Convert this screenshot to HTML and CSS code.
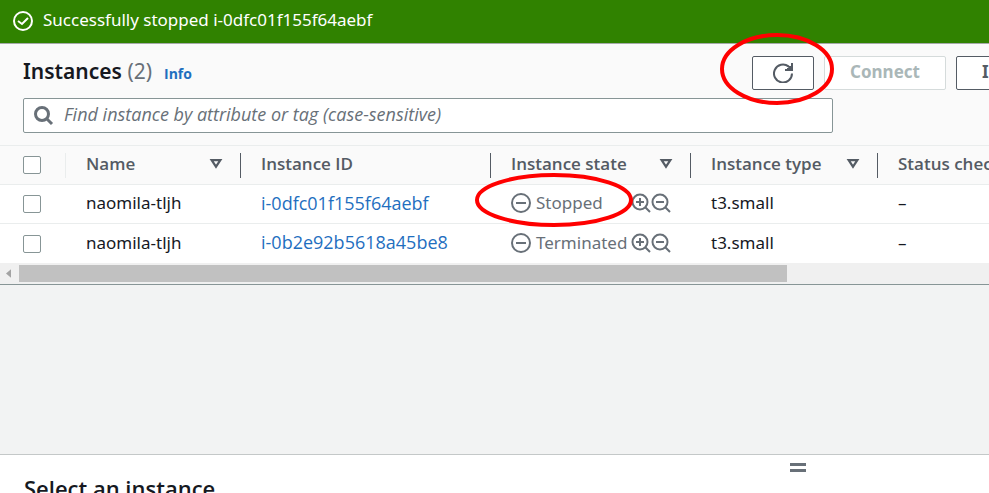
FILE: index.html
```html
<!DOCTYPE html>
<html lang="en">
<head>
<meta charset="utf-8">
<title>Instances</title>
<link rel="stylesheet" href="styles.css">
</head>
<body>
<svg class="sprite" aria-hidden="true">
  <symbol id="stopped" viewBox="0 0 20 20"><circle cx="10" cy="10" r="9"/><path d="M5 10h10"/></symbol>
  <symbol id="zoom-in" viewBox="0 0 20 20"><circle cx="9" cy="9" r="7.500"/><path d="M14 14l5 5M5 9h8M9 5v8"/></symbol>
  <symbol id="zoom-out" viewBox="0 0 20 20"><circle cx="9" cy="9" r="7.500"/><path d="M14 14l5 5M5 9h8"/></symbol>
  <symbol id="sort" viewBox="0 0 12 11"><path d="M2 2h8L6 8z"/></symbol>
</svg>

<div class="banner" role="status">
  <svg class="icon" viewBox="0 0 20 20"><circle cx="10" cy="10" r="9"/><path d="M5 10l4 3 6-6"/></svg>
  <span>Successfully stopped i-0dfc01f155f64aebf</span>
</div>

<main class="instances">
  <header class="toolbar">
    <h1>Instances <span class="count">(2)</span></h1>
    <a class="info" href="#info">Info</a>
    <div class="actions">
      <div class="marked">
        <button class="btn refresh" aria-label="Refresh">
          <svg class="icon" viewBox="0 0 20 20"><path d="M19 10.500a9 9 0 1 1-3.500-7.100L18 6M19 0v7h-7M17 3v3h-3"/></svg>
        </button>
        <svg class="ring ring-refresh" viewBox="0 0 114 72"><ellipse cx="57" cy="36" rx="55" ry="34"/></svg>
      </div>
      <button class="btn" disabled>Connect</button>
      <button class="btn">Instance state</button>
    </div>
  </header>

  <label class="search">
    <svg class="icon" viewBox="0 0 20 20"><circle cx="8" cy="8" r="6.500"/><path d="M13 13l5 5"/></svg>
    <input type="text" aria-label="Find instance" placeholder="Find instance by attribute or tag (case-sensitive)">
  </label>

  <div class="table-wrap">
    <table>
      <colgroup><col class="c-check"><col class="c-name"><col class="c-id"><col class="c-state"><col class="c-type"><col class="c-status"></colgroup>
      <thead>
        <tr>
          <th><input type="checkbox" aria-label="Select all"></th>
          <th><div class="head">Name<svg class="sort"><use href="#sort"/></svg></div></th>
          <th><div class="head">Instance ID</div></th>
          <th><div class="head">Instance state<svg class="sort"><use href="#sort"/></svg></div></th>
          <th><div class="head">Instance type<svg class="sort"><use href="#sort"/></svg></div></th>
          <th><div class="head">Status check</div></th>
        </tr>
      </thead>
      <tbody>
        <tr>
          <td><input type="checkbox" aria-label="Select i-0dfc01f155f64aebf"></td>
          <td>naomila-tljh</td>
          <td><a href="#i-0dfc01f155f64aebf">i-0dfc01f155f64aebf</a></td>
          <td>
            <div class="state marked">
              <svg class="icon"><use href="#stopped"/></svg><span class="label">Stopped</span>
              <button class="mini" aria-label="Include"><svg class="icon"><use href="#zoom-in"/></svg></button><button class="mini" aria-label="Exclude"><svg class="icon"><use href="#zoom-out"/></svg></button>
              <svg class="ring ring-state" viewBox="0 0 158 54"><ellipse cx="79" cy="27" rx="77" ry="25"/></svg>
            </div>
          </td>
          <td>t3.small</td>
          <td>–</td>
        </tr>
        <tr>
          <td><input type="checkbox" aria-label="Select i-0b2e92b5618a45be8"></td>
          <td>naomila-tljh</td>
          <td><a href="#i-0b2e92b5618a45be8">i-0b2e92b5618a45be8</a></td>
          <td>
            <div class="state">
              <svg class="icon"><use href="#stopped"/></svg><span class="label">Terminated</span>
              <button class="mini" aria-label="Include"><svg class="icon"><use href="#zoom-in"/></svg></button><button class="mini" aria-label="Exclude"><svg class="icon"><use href="#zoom-out"/></svg></button>
            </div>
          </td>
          <td>t3.small</td>
          <td>–</td>
        </tr>
      </tbody>
    </table>
  </div>
  <div class="scrollbar">
    <svg class="arrow" viewBox="0 0 6 10"><path d="M6 0v10L0 5z"/></svg>
    <div class="track"><div class="thumb"></div></div>
  </div>
</main>

<section class="details">
  <div class="handle"></div>
  <h2>Select an instance</h2>
</section>
</body>
</html>
```

FILE: styles.css
```css
* { box-sizing: border-box; }

body {
  margin: 0;
  height: 100vh;
  display: flex;
  flex-direction: column;
  overflow: hidden;
  background: #f2f3f3;
  color: #16191f;
  font-family: "Noto Sans", "Open Sans", sans-serif;
  font-size: 17px;
  line-height: 24px;
}

.sprite { display: none; }

svg, symbol {
  fill: none;
  stroke: currentColor;
  stroke-width: 2;
}

.icon { flex: none; width: 20px; height: 20px; display: block; }

.banner {
  flex: none;
  display: flex;
  align-items: center;
  gap: 10px;
  height: 44px;
  padding: 0 13px 2px;
  background: #308200;
  border-bottom: 1px solid #a5aaaa;
  color: #fff;
}
.banner span { padding-bottom: 2px; }

.instances {
  flex: none;
  background: #fafafa;
  border-bottom: 1px solid #879596;
}

.toolbar {
  display: flex;
  align-items: center;
  padding: 12px 0 8px 23px;
}

h1, h2 { margin: 0; line-height: 28px; font-weight: 600; }
h1 { padding-bottom: 4px; font-size: 21px; }
h2 { font-family: "Open Sans", sans-serif; font-size: 22px; }
.count { color: #687078; font-weight: 400; }

a { color: #1f6fbf; font-family: "Open Sans", sans-serif; text-decoration: none; }
td a { font-size: 18px; }
.info { margin: 2px 0 0 12px; font-size: 14px; line-height: 20px; font-weight: 700; }

.actions {
  display: flex;
  gap: 10px;
  width: 237px;
  margin-left: auto;
}

.marked { display: flex; position: relative; }

.btn {
  flex: none;
  height: 34px;
  padding: 0 25px 2px;
  background: #fff;
  border: 1px solid #545b64;
  border-radius: 2px;
  color: #545b64;
  font: inherit;
  font-weight: 700;
  white-space: nowrap;
}
.btn:disabled { border-color: #d5dbdb; color: #aab7b8; }
.refresh { padding: 0 20px; }

.ring { position: absolute; stroke: #f00; stroke-width: 4; z-index: 1; pointer-events: none; }
.ring-refresh { left: -32px; top: -23px; width: 114px; height: 72px; }
.ring-state { left: -36px; top: -20px; width: 158px; height: 54px; }

.search {
  display: flex;
  align-items: center;
  gap: 10px;
  height: 35px;
  margin: 0 156px 12px 23px;
  padding: 0 10px;
  background: #fff;
  border: 1px solid #879596;
  border-radius: 2px;
  color: #687078;
}
.search .icon { stroke-width: 3; }
.search input {
  flex: 1;
  min-width: 0;
  padding: 0 0 3px;
  border: 0;
  outline: 0;
  background: none;
  font: 18px/24px "Open Sans", sans-serif;
}
.search input::placeholder { color: #687078; font-style: italic; opacity: 1; }

.table-wrap { overflow: hidden; }

table {
  width: 1100px;
  table-layout: fixed;
  border-collapse: separate;
  border-spacing: 0;
}
.c-check { width: 65px; }
.c-name { width: 175px; }
.c-id { width: 250px; }
.c-state { width: 200px; }
.c-type { width: 187px; }

th, td { height: 39px; padding: 0 0 2px 21px; text-align: left; white-space: nowrap; }
th { height: 40px; padding: 0; border: solid #eaeded; border-width: 1px 0; color: #545b64; font-family: "Open Sans", sans-serif; font-weight: 600; }
td { background: #fff; border-bottom: 1px solid #eaeded; }
tr:last-child td { border-bottom: 0; }
th:first-child, td:first-child { padding: 0 0 0 23px; }

.head {
  display: flex;
  align-items: center;
  justify-content: space-between;
  height: 25px;
  padding: 0 17px 2px 20px;
  border-left: 1px solid #545b64;
}
th:nth-child(2) .head { border-color: #eaeded; }
.sort { width: 14px; height: 12px; }

input[type="checkbox"] {
  appearance: none;
  display: block;
  width: 18px;
  height: 18px;
  margin: 0;
  background: #fff;
  border: 1px solid #879596;
  border-radius: 2px;
}

.state { display: flex; align-items: center; height: 20px; color: #687078; }
.state .label { flex: none; width: 100px; padding-left: 5px; }
.mini { width: 20px; height: 20px; padding: 0; border: 0; background: none; color: inherit; }

.scrollbar {
  display: flex;
  align-items: center;
  gap: 8px;
  height: 21px;
  padding: 1px 22px 2px 6px;
  background: #f0f0f0;
}
.arrow { width: 5px; height: 9px; fill: #a3a3a3; stroke: none; }
.track { flex: 1; height: 17px; }
.thumb { width: 81%; height: 100%; background: #c1c1c1; }

.details {
  position: relative;
  flex: none;
  height: 39px;
  margin-top: auto;
  padding: 19px 24px 0;
  background: #fff;
  border-top: 1px solid #c4c8c8;
}
.handle {
  position: absolute;
  top: 8px;
  right: 183px;
  width: 16px;
  height: 9px;
  border: solid #687078;
  border-width: 3px 0;
}
```
